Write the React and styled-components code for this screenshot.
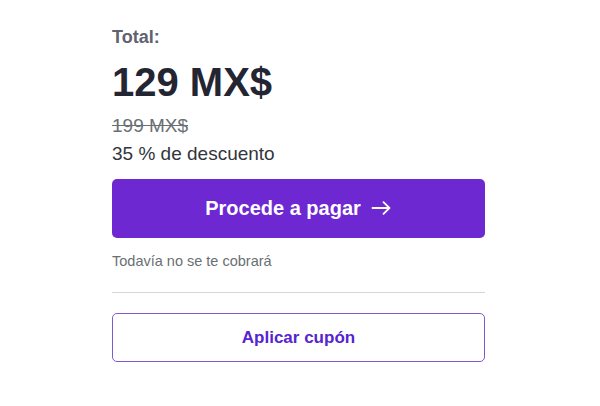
import React from "react";
import styled, { createGlobalStyle } from "styled-components";

const GlobalStyle = createGlobalStyle`
  html, body {
    margin: 0;
    padding: 0;
    background: #ffffff;
  }
  body {
    font-family: "Liberation Sans", Arial, sans-serif;
  }
`;

const Page = styled.div`
  width: 600px;
  height: 406px;
  box-sizing: border-box;
  padding: 27px 0 0 112px;
`;

const Checkout = styled.section`
  width: 373px;
  display: flex;
  flex-direction: column;
`;

const Label = styled.div`
  font-size: 18px;
  line-height: 21.6px;
  font-weight: 700;
  color: #5f626f;
`;

const Price = styled.div`
  margin-top: 9px;
  font-size: 40px;
  line-height: 48px;
  font-weight: 700;
  color: #232533;
`;

const OldPrice = styled.div`
  margin-top: 7px;
  font-size: 19px;
  line-height: 26.6px;
  color: #6a6f73;
  text-decoration: line-through;
`;

const Discount = styled.div`
  margin-top: 2px;
  font-size: 19px;
  line-height: 26.6px;
  color: #33353d;
`;

const PayButton = styled.button`
  margin-top: 11px;
  height: 59px;
  border: none;
  border-radius: 5px;
  background: #6d28d2;
  color: #ffffff;
  font-family: inherit;
  font-size: 20px;
  font-weight: 700;
  display: flex;
  align-items: center;
  justify-content: center;
  gap: 10px;
  cursor: pointer;
`;

const Note = styled.div`
  margin-top: 13px;
  font-size: 14.5px;
  line-height: 20.3px;
  color: #6a6f73;
`;

const Divider = styled.hr`
  margin: 21px 0 0;
  border: none;
  border-top: 1px solid #d1d7dc;
`;

const CouponButton = styled.button`
  margin-top: 20px;
  height: 49px;
  border: 1px solid #8058d4;
  border-radius: 5px;
  background: #ffffff;
  color: #5624d0;
  font-family: inherit;
  font-size: 17px;
  font-weight: 700;
  cursor: pointer;
`;

function Arrow() {
  return (
    <svg width="21" height="14" viewBox="0 0 21 14" fill="none">
      <path
        d="M1.5 7h17M12.5 1.2 18.4 7l-5.9 5.8"
        stroke="#ffffff"
        strokeWidth="1.8"
        strokeLinecap="round"
        strokeLinejoin="round"
      />
    </svg>
  );
}

export default function App() {
  return (
    <>
      <GlobalStyle />
      <Page>
        <Checkout>
          <Label>Total:</Label>
          <Price>129 MX$</Price>
          <OldPrice>199 MX$</OldPrice>
          <Discount>35 % de descuento</Discount>
          <PayButton>
            Procede a pagar
            <Arrow />
          </PayButton>
          <Note>Todavía no se te cobrará</Note>
          <Divider />
          <CouponButton>Aplicar cupón</CouponButton>
        </Checkout>
      </Page>
    </>
  );
}
